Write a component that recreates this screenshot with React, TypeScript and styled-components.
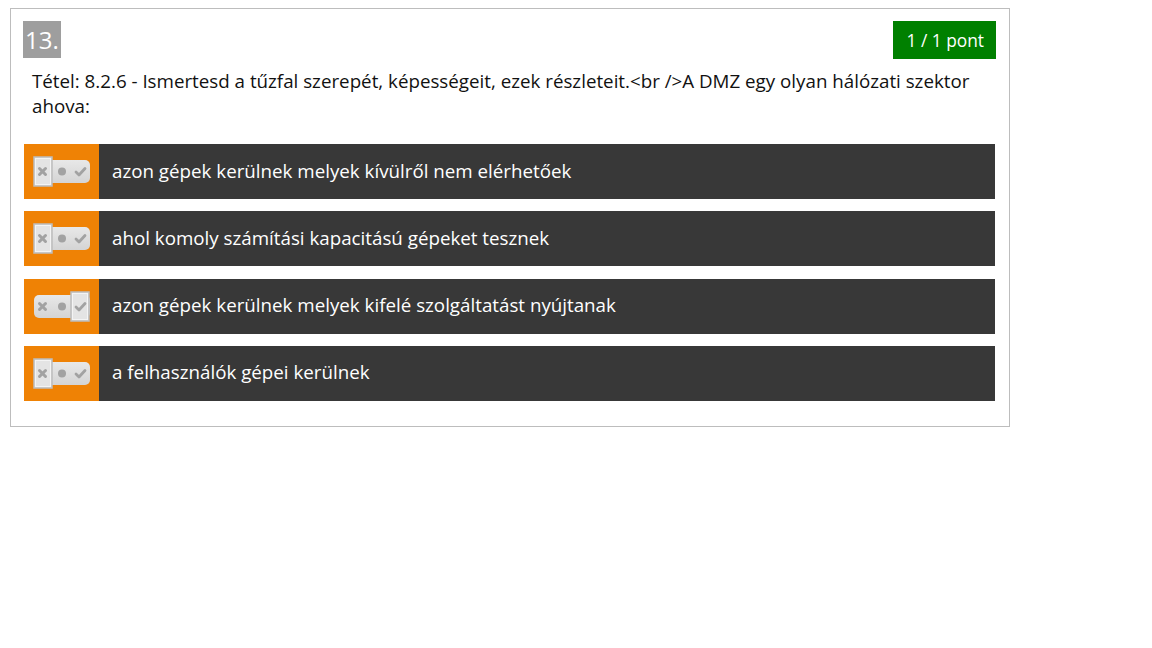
import React from "react";
import styled, { createGlobalStyle } from "styled-components";

const Global = createGlobalStyle`
  html, body { margin: 0; padding: 0; background: #fff; }
  body { font-family: "Open Sans", "Noto Sans", sans-serif; }
`;

const Card = styled.div`
  box-sizing: border-box;
  width: 1000px;
  margin: 8px 0 0 10px;
  border: 1px solid #bdbdbd;
  padding: 12px 14px 25px 13px;
  background: #fff;
`;

const Header = styled.div`
  display: flex;
  justify-content: space-between;
  align-items: flex-start;
`;

const Number = styled.div`
  box-sizing: border-box;
  height: 37px;
  padding: 0 2px;
  margin-left: -1px;
  background: #9e9e9e;
  color: #fff;
  font-size: 24px;
  line-height: 37px;
`;

const Points = styled.div`
  box-sizing: border-box;
  height: 38px;
  margin-right: -1px;
  padding: 0 12px 0 13px;
  background: #008000;
  color: #fff;
  font-size: 17.33px;
  line-height: 38px;
`;

const Question = styled.div`
  margin: 8.5px 0 0 8px;
  padding-right: 10px;
  font-size: 18.75px;
  line-height: 25px;
  color: #111;
`;

const Answers = styled.div`
  display: flex;
  flex-direction: column;
  gap: 12.33px;
  margin-top: 26.5px;
`;

const Row = styled.div`
  display: flex;
  height: 55px;
  background: #383838;
`;

const Cell = styled.div`
  flex: 0 0 75px;
  background: #ef8205;
  display: flex;
  align-items: center;
  justify-content: center;
`;

const Label = styled.div`
  flex: 1;
  display: flex;
  align-items: center;
  padding: 0 0 3px 13px;
  color: #fff;
  font-size: 18.75px;
`;

type Sel = "no" | "mid" | "yes";

const Toggle: React.FC<{ sel: Sel }> = ({ sel }) => {
  const boxX = sel === "no" ? 1 : sel === "mid" ? 19 : 38;
  return (
    <svg width="58" height="31" viewBox="0 0 58 31">
      <defs>
        <linearGradient id={`g-${sel}`} x1="0" y1="0" x2="0" y2="1">
          <stop offset="0" stopColor="#e8e8e8" />
          <stop offset="1" stopColor="#d4d4d4" />
        </linearGradient>
      </defs>
      <rect x="1" y="4" width="56" height="23" rx="5" fill={`url(#g-${sel})`} />
      <rect x={boxX} y="1" width="18" height="29" fill="#e4e4e4" stroke="#bdbdbd" strokeWidth="1.5" />
      <rect x={boxX + 1.5} y="2.5" width="15" height="26" fill="none" stroke="#f4f4f4" strokeWidth="1" />
      <g stroke="#a2a2a2" strokeWidth="3" strokeLinecap="round">
        <line x1="6.5" y1="12.5" x2="12.5" y2="18.5" />
        <line x1="12.5" y1="12.5" x2="6.5" y2="18.5" />
      </g>
      <circle cx="29" cy="15.5" r="4" fill="#a2a2a2" />
      <path d="M43 16 L46 19 L52 12.5" fill="none" stroke="#a2a2a2" strokeWidth="2.8" strokeLinecap="round" strokeLinejoin="round" />
    </svg>
  );
};

const answers: { text: string; sel: Sel }[] = [
  { text: "azon gépek kerülnek melyek kívülről nem elérhetőek", sel: "no" },
  { text: "ahol komoly számítási kapacitású gépeket tesznek", sel: "no" },
  { text: "azon gépek kerülnek melyek kifelé szolgáltatást nyújtanak", sel: "yes" },
  { text: "a felhasználók gépei kerülnek", sel: "no" },
];

export default function App() {
  return (
    <>
      <Global />
      <Card>
        <Header>
          <Number>13.</Number>
          <Points>1 / 1 pont</Points>
        </Header>
        <Question>
          Tétel: 8.2.6 - Ismertesd a tűzfal szerepét, képességeit, ezek részleteit.&lt;br /&gt;A DMZ egy olyan hálózati szektor ahova:
        </Question>
        <Answers>
          {answers.map((a, i) => (
            <Row key={i}>
              <Cell>
                <Toggle sel={a.sel} />
              </Cell>
              <Label>{a.text}</Label>
            </Row>
          ))}
        </Answers>
      </Card>
    </>
  );
}
